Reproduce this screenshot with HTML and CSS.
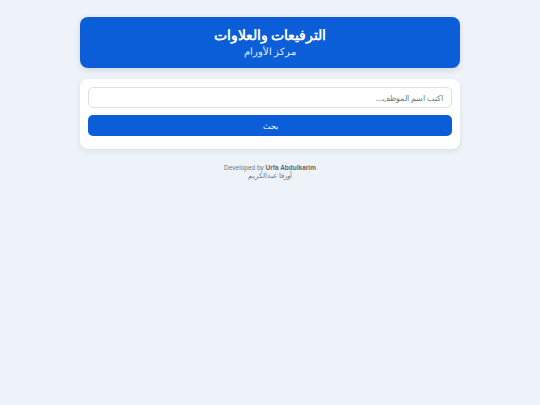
FILE: index.html
```html
<!DOCTYPE html>
<html lang="ar" dir="rtl">
<head>
<meta charset="utf-8">
<title>الترفيعات والعلاوات</title>
<link rel="stylesheet" href="styles.css">
</head>
<body>
<div class="wrap">
  <header class="hero">
    <h1 class="hero-title">الترفيعات والعلاوات</h1>
    <p class="hero-sub">مركز الأورام</p>
  </header>
  <section class="card">
    <input class="search" type="text" placeholder="اكتب اسم الموظف...">
    <button class="btn" type="button">بحث</button>
  </section>
  <footer class="foot">
    <div dir="ltr">Developed by <b>Urfa Abdulkarim</b></div>
    <div>أورفا عبدالكريم</div>
  </footer>
</div>
</body>
</html>
```
FILE: styles.css
```css
* { box-sizing: border-box; }
html, body { margin: 0; padding: 0; }
body {
  background: #eef2f9;
  font-family: "Noto Sans", "Liberation Sans", sans-serif;
  color: #333;
}
.wrap {
  width: 380px;
  margin: 17px auto 0;
}
.hero {
  background: #0b5ed7;
  color: #fff;
  border-radius: 8px;
  height: 51px;
  padding-top: 9px;
  text-align: center;
  box-shadow: 0 2px 6px rgba(0,0,0,0.12);
}
.hero-title {
  margin: 0;
  font-size: 13.5px;
  font-weight: bold;
  line-height: 18px;
}
.hero-sub {
  margin: 1px 0 0;
  font-size: 9.5px;
  line-height: 14px;
  color: #e6eefc;
}
.card {
  margin-top: 11px;
  background: #fff;
  border-radius: 8px;
  padding: 8px 8px 13px;
  box-shadow: 0 2px 6px rgba(0,0,0,0.08);
  display: flex;
  flex-direction: column;
  gap: 7px;
}
.search {
  height: 21px;
  border: 1px solid #dcdfe4;
  border-radius: 5px;
  padding: 0 8px;
  font-family: inherit;
  font-size: 7.5px;
  background: #fff;
  color: #333;
  outline: none;
}
.search::placeholder { color: #777; }
.btn {
  height: 21px;
  border: none;
  border-radius: 5px;
  background: #0b5ed7;
  color: #fff;
  font-family: inherit;
  font-size: 7.5px;
}
.foot {
  margin-top: 15px;
  text-align: center;
  font-family: "Liberation Sans", Arial, sans-serif;
  font-size: 6.5px;
  line-height: 8px;
  color: #777;
}
.foot b { color: #666; }
```
